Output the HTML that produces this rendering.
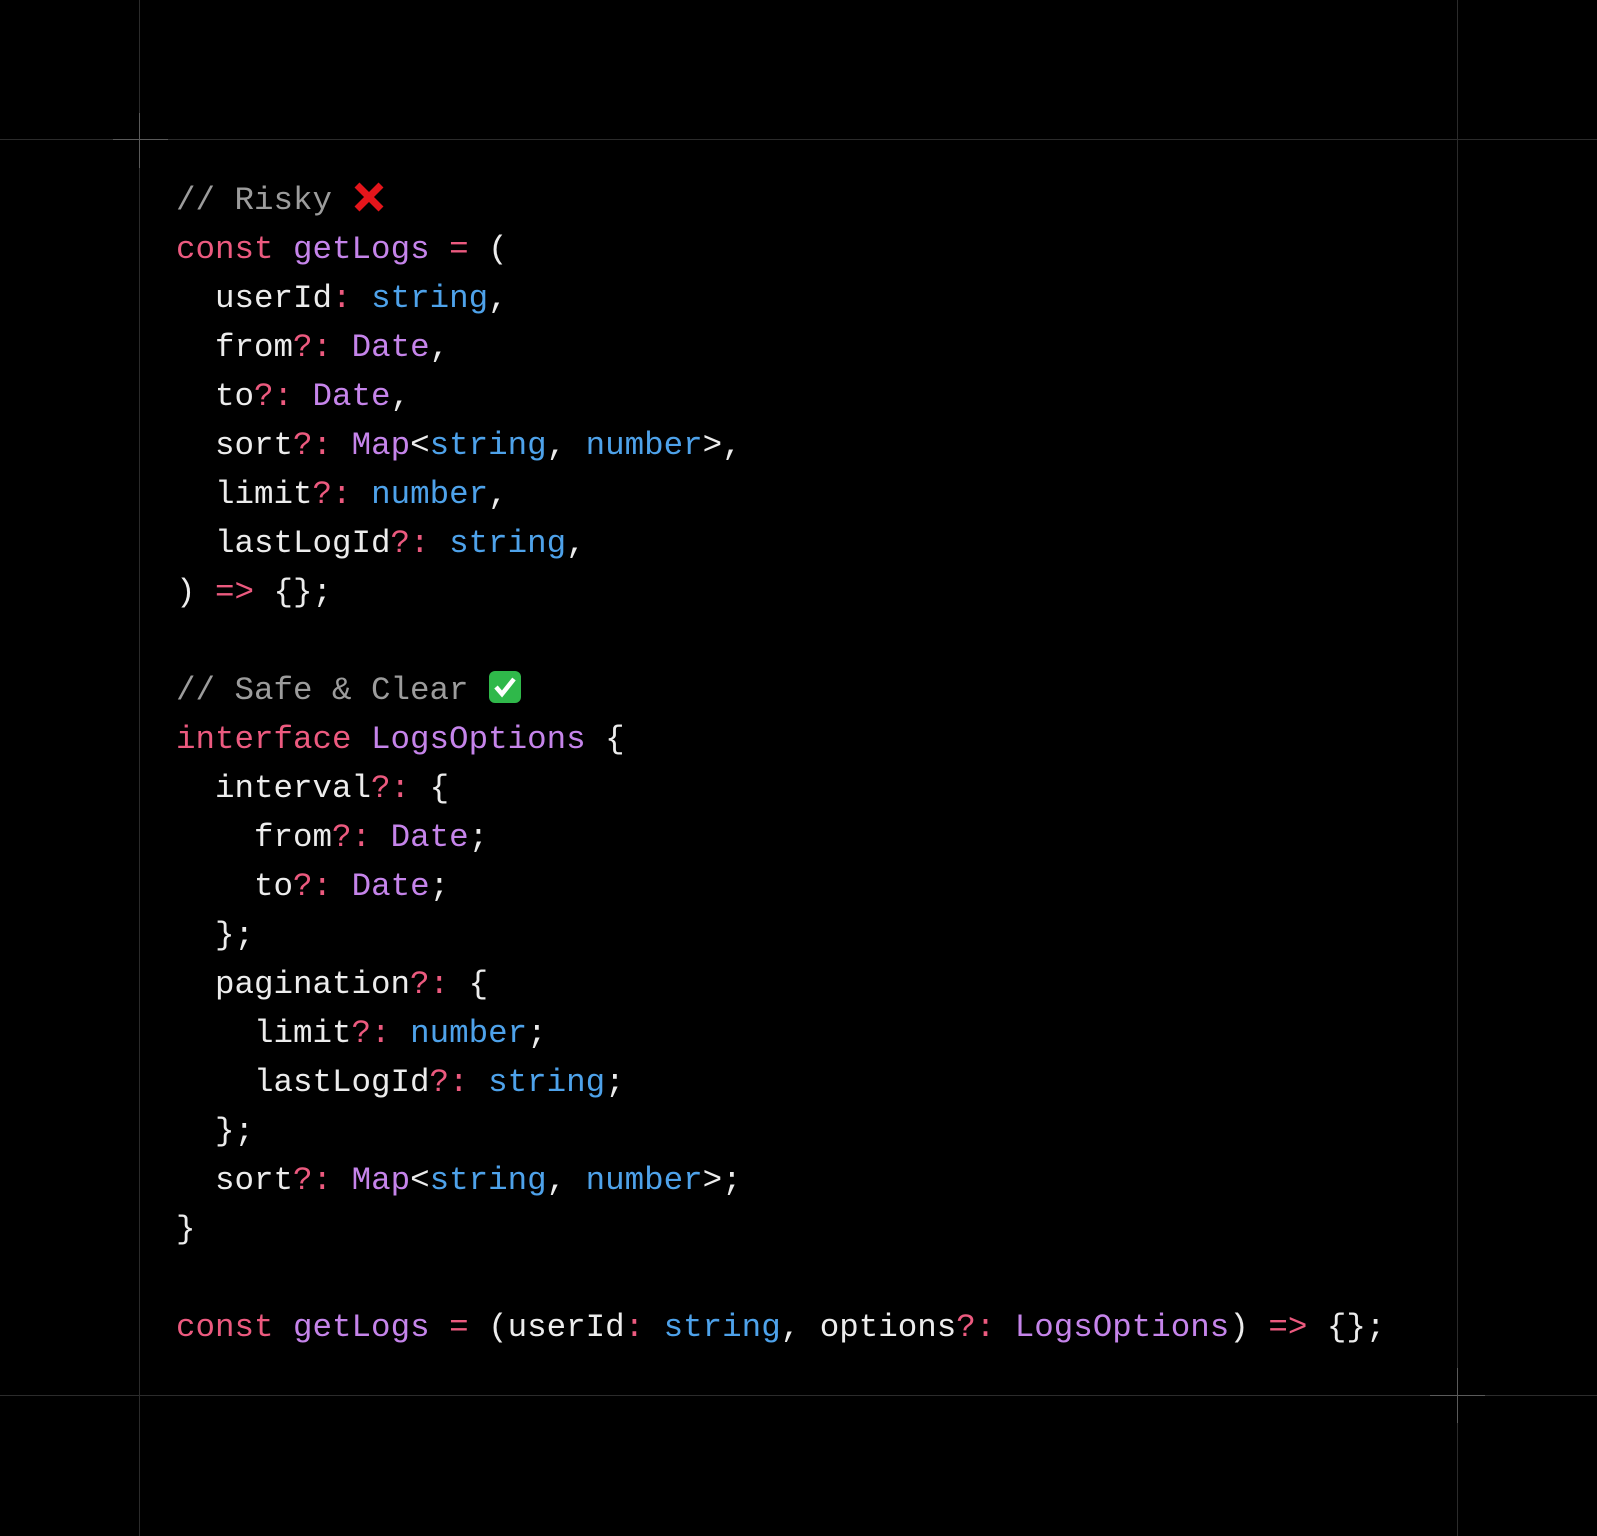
<!DOCTYPE html>
<html><head><meta charset="utf-8"><style>
html,body{margin:0;padding:0;background:#000;width:1597px;height:1536px;overflow:hidden;position:relative}
.l{position:absolute;background:#2b2b2b}
.c{position:absolute;background:#5a5a5a}
pre{position:absolute;left:176px;top:176px;margin:0;font-family:"Liberation Mono",monospace;font-size:32.5px;line-height:49px;color:#ececec}
.k{color:#ec5a7f}.p{color:#c584ea}.b{color:#4ea2ea}.g{color:#9c9c9c}
</style></head><body>
<div class="l" style="left:0;top:139px;width:1597px;height:1px"></div>
<div class="l" style="left:0;top:1395px;width:1597px;height:1px"></div>
<div class="l" style="left:139px;top:0;width:1px;height:1536px"></div>
<div class="l" style="left:1457px;top:0;width:1px;height:1536px"></div>
<div class="c" style="left:113px;top:139px;width:55px;height:1px"></div>
<div class="c" style="left:139px;top:113px;width:1px;height:55px"></div>
<div class="c" style="left:1430px;top:1395px;width:55px;height:1px"></div>
<div class="c" style="left:1457px;top:1368px;width:1px;height:55px"></div>
<pre><span class="g">// Risky</span> <svg width="34" height="34" viewBox="0 0 34 34" style="vertical-align:-5px"><path d="M5 5L29 29M29 5L5 29" stroke="#e5151b" stroke-width="7" stroke-linecap="butt"/></svg>
<span class="k">const</span> <span class="p">getLogs</span> <span class="k">=</span> (
  userId<span class="k">:</span> <span class="b">string</span>,
  from<span class="k">?:</span> <span class="p">Date</span>,
  to<span class="k">?:</span> <span class="p">Date</span>,
  sort<span class="k">?:</span> <span class="p">Map</span>&lt;<span class="b">string</span>, <span class="b">number</span>&gt;,
  limit<span class="k">?:</span> <span class="b">number</span>,
  lastLogId<span class="k">?:</span> <span class="b">string</span>,
) <span class="k">=&gt;</span> {};

<span class="g">// Safe &amp; Clear</span> <svg width="34" height="34" viewBox="0 0 34 34" style="vertical-align:-5px"><rect x="1" y="1" width="32" height="32" rx="6" fill="#2fb84a"/><path d="M8 17L14 24L26 9" stroke="#fff" stroke-width="4.5" fill="none"/></svg>
<span class="k">interface</span> <span class="p">LogsOptions</span> {
  interval<span class="k">?:</span> {
    from<span class="k">?:</span> <span class="p">Date</span>;
    to<span class="k">?:</span> <span class="p">Date</span>;
  };
  pagination<span class="k">?:</span> {
    limit<span class="k">?:</span> <span class="b">number</span>;
    lastLogId<span class="k">?:</span> <span class="b">string</span>;
  };
  sort<span class="k">?:</span> <span class="p">Map</span>&lt;<span class="b">string</span>, <span class="b">number</span>&gt;;
}

<span class="k">const</span> <span class="p">getLogs</span> <span class="k">=</span> (userId<span class="k">:</span> <span class="b">string</span>, options<span class="k">?:</span> <span class="p">LogsOptions</span>) <span class="k">=&gt;</span> {};</pre>
</body></html>
